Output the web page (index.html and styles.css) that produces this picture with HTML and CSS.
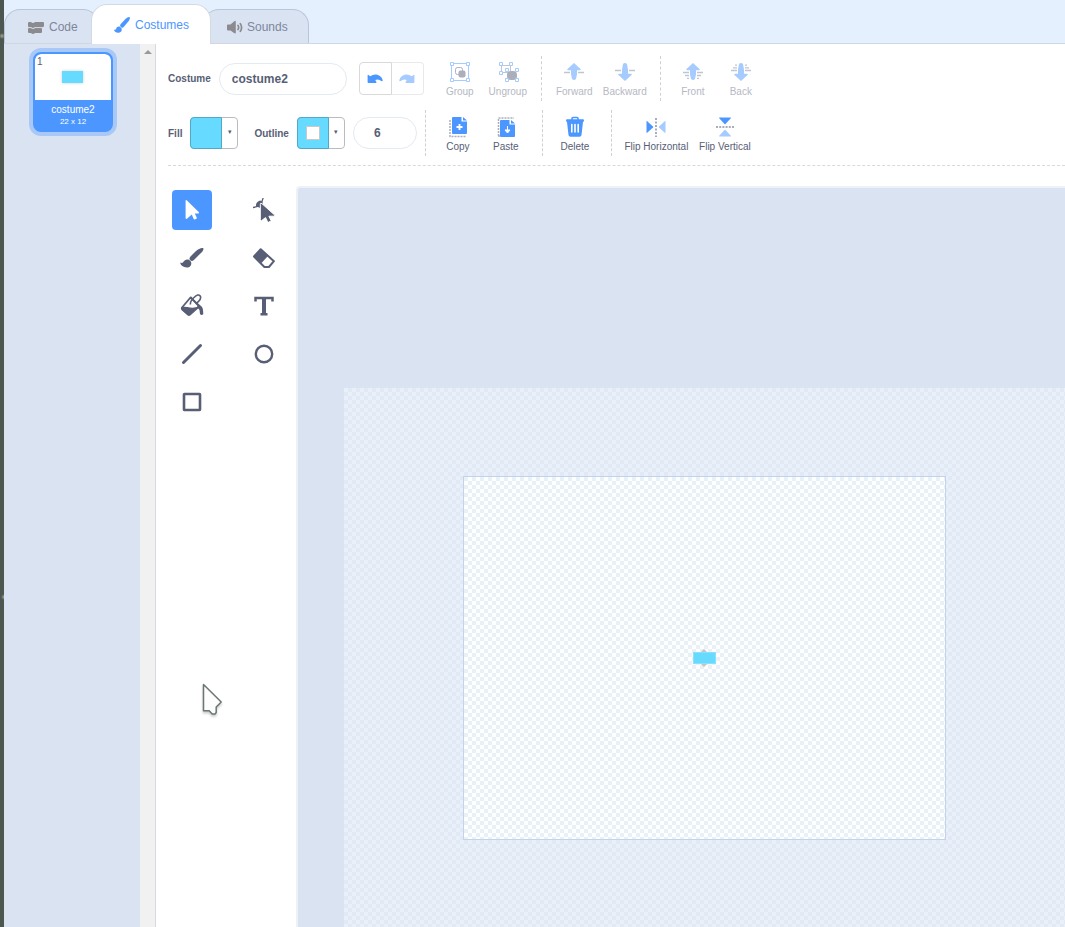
FILE: index.html
```html
<!DOCTYPE html>
<html lang="en">
<head>
<meta charset="utf-8">
<title>Costume editor</title>
<link rel="stylesheet" href="styles.css">
</head>
<body>
<div class="edge"></div>
<div class="app">
  <nav class="tabs">
    <button class="tab tab-code"><svg width="16" height="14" viewBox="0 0 16 14" fill="#8b8b8f"><path d="M1 2h2q1 1 2 1t2-1h8q1 0 1 1v3q0 1-1 1H7Q6 8 5 8T3 7H1Q0 7 0 6V3q0-1 1-1z"/><path d="M1 8h2q1 1 2 1t2-1h6q1 0 1 1v3q0 1-1 1H7q-1 1-2 1t-2-1H1q-1 0-1-1V9q0-1 1-1z"/><path d="M0 7.600h3.200q.8.9 1.800.9t1.800-.9H15" fill="none" stroke="#c5cad5" stroke-width=".6"/></svg>Code</button>
    <button class="tab tab-active"><svg width="16" height="16" viewBox="0 0 16 16" fill="#4c97ff"><path d="M15.600.2c-.8-.6-2.600.3-4.200 1.800L6.800 7c-.9 1-.9 1.900-.3 2.500l.9.900c.8.600 1.700.3 2.500-.6l4.400-5.200C15.600 2.800 16.400.8 15.600.2z"/><path d="M6.200 9.900c-1.700-.8-3.500.1-3.900 1.500-.3 1-.9 1.600-2.300 1.400 0 1.600 2 3.100 4.700 2.900 2.900-.2 4.500-3.700 1.500-5.800z"/></svg>Costumes</button>
    <button class="tab tab-sounds"><svg width="16" height="14" viewBox="0 0 16 14"><path fill="#8b8b8f" d="M1 4.500h2.500L7 1.400Q8.800 0 8.800 2v10.500q0 1.500-1.800.6L3.500 10.500H1q-1 0-1-1v-4q0-1 1-1z"/><path d="M11 5.500q1.300 2 0 4M13.300 3.600q2.600 3.900 0 7.800" fill="none" stroke="#8b8b8f" stroke-width="1.700" stroke-linecap="round"/></svg>Sounds</button>
  </nav>
  <main class="main">
    <aside class="list">
      <button class="costume">
        <span class="thumb"><span class="num">1</span><span class="sprite"></span></span>
        <span class="cname">costume2</span>
        <span class="csize">22 x 12</span>
      </button>
    </aside>
    <div class="scroll"><svg width="8" height="4" viewBox="0 0 8 4"><path d="M4 0l4 4H0z" fill="#999"/></svg></div>
    <section class="editor">
      <div class="toolbar">
        <div class="row row-top">
          <label class="lbl" for="name">Costume</label>
          <input class="field name" id="name" type="text" value="costume2">
          <div class="history">
            <button aria-label="Undo"><svg width="16" height="10" viewBox="0 0 16 10"><path fill="#4c97ff" d="M.6 1.500q0-1 .9-.5l1.700 1.200Q8-.800 12.500 1.700 15 3.100 15.700 6q0 1.800-1.400 1Q11.500 4.500 8.200 6l1 1.600q.7 1.400-.7 1.400H1.400q-.8 0-.8-.8z"/></svg></button>
            <button aria-label="Redo" disabled><svg width="16" height="10" viewBox="0 0 16 10"><path fill="#a6cbff" d="M15.400 1.500q0-1-.9-.5l-1.700 1.200Q8-.800 3.500 1.700 1 3.100.3 6q0 1.800 1.400 1Q4.500 4.500 7.800 6l-1 1.600Q6.100 9 7.500 9h7.100q.8 0 .8-.8z"/></svg></button>
          </div>
          <div class="group first">
            <button class="act off"><svg width="22" height="22" viewBox="0 0 22 22"><path d="M2.500 2.500h17v17h-17z" fill="none" stroke="#a6cbff"/><rect x="6.500" y="6.500" width="7" height="7" rx="2" fill="#fff" stroke="#abb0be"/><rect x="9.500" y="9.500" width="7" height="7" rx="2" fill="#abaebb"/><g fill="#fff" stroke="#a6cbff"><path d="M1.500 1.500h3v3h-3zM17.500 1.500h3v3h-3zM1.500 17.500h3v3h-3zM17.500 17.500h3v3h-3z"/></g></svg>Group</button>
            <button class="act off"><svg width="22" height="22" viewBox="0 0 22 22"><path d="M4.500 4.500h9v7h-9z" fill="none" stroke="#c1c5cf"/><rect x="10" y="10" width="10" height="9" rx="4" fill="#abaebb"/><g fill="#fff" stroke="#a6cbff"><path d="M2.500 1.500h3v3h-3zM12.500 1.500h3v3h-3zM2.500 10.500h3v3h-3zM8.500 7.500h3v3h-3zM18.500 7.500h3v3h-3zM8.500 17.500h3v3h-3zM18.500 17.500h3v3h-3z"/></g></svg>Ungroup</button>
          </div>
          <div class="group">
            <button class="act off mid"><svg width="22" height="22" viewBox="0 0 22 22"><path d="M1 11.500h6M15 11.500h6" stroke="#c1c5cf" stroke-width="1.500"/><path d="M11 2l6.500 6q1 1.200-.8 1.200H14v4L13 18q-2 2-4 0l-1-4.800v-4H5.300Q3.500 9.200 4.500 8z" fill="#a6cbff"/></svg>Forward</button>
            <button class="act off wide"><svg width="22" height="22" viewBox="0 0 22 22"><path d="M1 9.500h6M15 9.500h6" stroke="#c1c5cf" stroke-width="1.500"/><path d="M11 20l6.500-6q1-1.200-.8-1.200H14v-4L13 3q-2-2-4 0L8 8.800v4H5.300Q3.500 12.800 4.500 14z" fill="#a6cbff"/></svg>Backward</button>
          </div>
          <div class="group">
            <button class="act off"><svg width="22" height="22" viewBox="0 0 22 22"><path d="M1 11.500h6M15 11.500h6M3 14.500h4M15 14.500h4M5 17.300h2M15 17.300h2" stroke="#c1c5cf" stroke-width="1.300"/><path d="M11 2l6.500 6q1 1.200-.8 1.200H14v4L13 18q-2 2-4 0l-1-4.800v-4H5.300Q3.500 9.200 4.500 8z" fill="#a6cbff"/></svg>Front</button>
            <button class="act off"><svg width="22" height="22" viewBox="0 0 22 22"><path d="M1 9.500h6M15 9.500h6M3 6.800h4M15 6.800h4M5 4.200h2M15 4.200h2" stroke="#c1c5cf" stroke-width="1.300"/><path d="M11 20l6.500-6q1-1.200-.8-1.200H14v-4L13 3q-2-2-4 0L8 8.800v4H5.300Q3.500 12.800 4.500 14z" fill="#a6cbff"/></svg>Back</button>
          </div>
        </div>
        <div class="row row-low">
          <span class="lbl">Fill</span>
          <button class="swatch" aria-label="Fill colour"><span class="color"></span><span class="drop">▾</span></button>
          <span class="lbl outline">Outline</span>
          <button class="swatch" aria-label="Outline colour"><span class="color"><span class="hole"></span></span><span class="drop">▾</span></button>
          <input class="field stroke" type="text" value="6" aria-label="Outline width">
          <div class="group wide-end">
            <button class="act"><svg width="22" height="22" viewBox="0 0 22 22"><path d="M3 4v16.500h16" fill="none" stroke="#abaebb" stroke-width="1.500" stroke-dasharray="2 1"/><path d="M6 1h8.500v4.500H20V17q0 1-1 1H6q-1 0-1-1V2q0-1 1-1zM16 1l4 3.600h-4z" fill="#4c97ff"/><path d="M12.500 8v6M9.500 11h6" stroke="#fff" stroke-width="1.800"/></svg>Copy</button>
            <button class="act"><svg width="22" height="22" viewBox="0 0 22 22"><path d="M3.500 20V2H19M3 20h3" fill="none" stroke="#abaebb" stroke-width="1.500" stroke-dasharray="2 1"/><path d="M6 4h8.500v4.500H20V20q0 1-1 1H6q-1 0-1-1V5q0-1 1-1zM16 4l4 3.600h-4z" fill="#4c97ff"/><path d="M12.500 10v4h2.500l-2.500 3-2.500-3h2.500z" fill="#fff" stroke="#fff"/></svg>Paste</button>
          </div>
          <div class="group wide-end">
            <button class="act"><svg width="22" height="22" viewBox="0 0 22 22"><path d="M8 4V2.400Q8 1.500 9 1.500h4q1 0 1 .9V4" fill="none" stroke="#4c97ff" stroke-width="1.600"/><path d="M3 3.300h16q1 0 1 1.200T19 6l-1.500 13q-.2 1.800-2 1.800h-9q-1.800 0-2-1.800L3 6Q2 5.700 2 4.500t1-1.200z" fill="#4c97ff"/><path d="M7.800 8.500v7.500M11 8.500v7.500M14.200 8.500v7.500" stroke="#fff" stroke-width="1.600" stroke-linecap="round"/></svg>Delete</button>
          </div>
          <div class="group">
            <button class="act flip-h"><svg width="22" height="22" viewBox="0 0 22 22"><path d="M11 2v19" stroke="#8d93a2" stroke-width="1.500" stroke-dasharray="2 1.500"/><path d="M1.500 5.500q0-.8.700-.3L8 10.500q.5.500 0 1L2.200 16.700q-.7.500-.7-.3z" fill="#4c97ff"/><path d="M20.500 5.500q0-.8-.7-.3L14 10.500q-.5.500 0 1l5.800 5.200q.7.500.7-.3z" fill="#a6cbff"/></svg>Flip Horizontal</button>
            <button class="act flip-v"><svg width="22" height="22" viewBox="0 0 22 22"><path d="M2 11h18" stroke="#8d93a2" stroke-width="1.500" stroke-dasharray="2 1.200"/><path d="M5.500 1.500q-.8 0-.3.700L10.500 8q.5.500 1 0l5.300-5.800q.5-.7-.3-.7z" fill="#4c97ff"/><path d="M5.500 20.500q-.8 0-.3-.7l5.300-5.800q.5-.5 1 0l5.300 5.800q.5.700-.3.700z" fill="#a6cbff"/></svg>Flip Vertical</button>
          </div>
        </div>
      </div>
      <div class="work">
        <div class="tools">
          <button class="tool chosen" aria-label="Select"><svg width="24" height="24" viewBox="0 0 24 24"><path d="M5.600 2.800q0-1.500 1.100-.5l12 11.600q1.200 1.400-.5 1.500h-3.400l2 4.300q.2.700-.4 1l-1.700.7q-.7.200-1-.4l-1.900-4.400-4.600 3.900q-1.600 1.200-1.600-.8z" fill="#fff"/></svg></button>
          <button class="tool" aria-label="Reshape"><svg width="24" height="24" viewBox="0 0 24 24"><path d="M1 9.500Q9.500 9 11.200-.5" fill="none" stroke="#575e75" stroke-width="1.300"/><path d="M4 8q-.5-4 4-5.500 2 0 3 2.500l-3 5z" fill="#575e75"/><path d="M8.300 6.500v15.300q0 2 1.400.8l3.800-3 2.100 4.200q.4.700 1 .4l2-1q.6-.3.300-1l-2-4h4.700q2-.1.800-1.400L10 5.700q-1.700-1.400-1.700.8z" fill="#575e75" stroke="#fff"/></svg></button>
          <button class="tool" aria-label="Brush"><svg width="24" height="24" viewBox="0 0 24 24" fill="#575e75"><path d="M23.200 2.200c-1.400-.9-5 .8-7.700 3.200l-5.200 5.300q-1.700 2.200 0 3.600 1.500 1.400 3.600-.2l6-6.100C22.300 6 24.300 3 23.200 2.200z"/><path d="M9.300 13.900c-2.500-1.300-5 .2-5.700 1.700-.5 1.200-1.400 1.700-3.300 1 0 2.800 3.500 5.200 7.200 4.900 4.200-.5 5.200-5.600 1.800-7.600z"/></svg></button>
          <button class="tool" aria-label="Eraser"><svg width="24" height="24" viewBox="0 0 24 24"><path d="M8.700 3.200l13.200 12-5 5.800h-4.500L2 10.500z" fill="#fff" stroke="#575e75" stroke-width="2" stroke-linejoin="round"/><path d="M8.700 3l7.500 6.700-6.700 7.300-7.700-6.500z" fill="#575e75"/></svg></button>
          <button class="tool" aria-label="Fill"><svg width="24" height="24" viewBox="0 0 24 24"><path d="M10.500 3.500L2 13.500q-.7 1 .3 2l5.700 5q1 .8 2 0L19.500 12z" fill="#fff" stroke="#575e75" stroke-width="1.800" stroke-linejoin="round"/><path d="M1.500 13q3-.7 6 0 6 1.500 11-.5l-8.500 8.500q-1.200 1-2.300 0L1.500 15.500zM18.500 11q4 .5 4.500 5l.3 4q-1.700 2.200-3.300 0l-.5-4-2.500-3z" fill="#575e75"/><path d="M10.500 10.500q-.7-3 3.500-7t6-1.700-1.300 5.500q-1.500 2-3.200 2.200M10.500 3l9 10" fill="none" stroke="#575e75" stroke-width="1.600"/></svg></button>
          <button class="tool" aria-label="Text"><svg width="24" height="24" viewBox="0 0 24 24"><path d="M3.500 7.500V4h17v3.500M8.500 20.300h7" fill="none" stroke="#575e75" stroke-width="2.500"/><path d="M12 4v16" stroke="#575e75" stroke-width="4"/></svg></button>
          <button class="tool" aria-label="Line"><svg width="24" height="24" viewBox="0 0 24 24"><path d="M3.500 20.500l17-17" stroke="#575e75" stroke-width="3" stroke-linecap="round"/></svg></button>
          <button class="tool" aria-label="Circle"><svg width="24" height="24" viewBox="0 0 24 24"><circle cx="12" cy="12" r="8.200" fill="none" stroke="#575e75" stroke-width="2.400"/></svg></button>
          <button class="tool" aria-label="Rectangle"><svg width="24" height="24" viewBox="0 0 24 24"><rect x="4" y="4" width="16" height="16" rx=".5" fill="none" stroke="#575e75" stroke-width="2.600"/></svg></button>
        </div>
        <div class="canvas">
          <div class="outer"></div>
          <div class="board"></div>
          <svg class="center" width="18" height="18" viewBox="0 0 18 18"><path d="M9 0l6 6H3zM9 18l6-6H3z" fill="#c4c4c4"/></svg>
          <div class="shape"></div>
        </div>
      </div>
    </section>
  </main>
</div>
<svg class="pointer" width="24" height="36" viewBox="0 0 24 36"><path d="M3.500 2.500v26.200h5.700l3 3.300h2.800l1.200-1.500v-5.500l5-5z" fill="#fdfdfd" stroke="#6b7675" stroke-width="1.500" stroke-linejoin="round"/></svg>
</body>
</html>
```
FILE: styles.css
```css
* { box-sizing: border-box; }
body {
  margin: 0;
  display: flex;
  height: 100vh;
  overflow: hidden;
  font-family: "Liberation Sans", Arial, sans-serif;
  color: #575e75;
  background: #fff;
}
button { font: inherit; color: inherit; background: none; border: 0; padding: 0; }
svg { display: block; flex: none; }
.edge {
  width: 4px;
  flex: none;
  background:
    radial-gradient(circle at 2px 36px, #a9a58f, transparent 3px),
    radial-gradient(circle at 4px 597px, #a9a58f, transparent 3px),
    #4b5750;
}
.app { flex: 1; min-width: 0; display: flex; flex-direction: column; }

.tabs {
  display: flex;
  align-items: flex-end;
  height: 44px;
  flex: none;
  background: #e5f0ff;
  border-bottom: 1px solid #d0d7e3;
}
.tab {
  display: flex;
  align-items: center;
  gap: 5px;
  height: 34px;
  border: 1px solid #b9c5da;
  border-bottom: 0;
  border-radius: 16px 16px 0 0;
  background: #d9e3f2;
  color: #7f869b;
  font-size: 12px;
}
.tab-code { width: 95px; padding-left: 23px; }
.tab-active {
  position: relative;
  width: 120px;
  height: 40px;
  margin: 0 -8px -1px;
  padding-left: 22px;
  background: #fff;
  border-color: #d3dae5;
  color: #4c97ff;
}
.tab-sounds { width: 106px; padding-left: 23px; gap: 4px; }

.main { flex: 1; min-height: 0; display: flex; }
.list { width: 136px; flex: none; padding: 8px 29px; background: #d9e3f2; }
.costume {
  display: flex;
  flex-direction: column;
  align-items: center;
  width: 80px;
  height: 80px;
  overflow: hidden;
  border: 2px solid #4c97ff;
  border-radius: 8px;
  background: #4c97ff;
  color: #fff;
  box-shadow: 0 0 0 4px #a8c9f8;
}
.thumb {
  display: flex;
  width: 76px;
  height: 46px;
  padding: 0 2px;
  background: #fff;
  border-radius: 6px 6px 0 0;
}
.num { width: 25px; text-align: left; font-size: 10px; line-height: 16px; color: #575e75; }
.sprite { width: 21px; height: 12px; margin-top: 17px; background: #66dbff; box-shadow: 0 0 3px #ccc; }
.cname { margin-top: 3px; font-size: 10px; line-height: 13px; }
.csize { font-size: 8px; line-height: 12px; }
.scroll {
  width: 16px;
  flex: none;
  display: flex;
  justify-content: center;
  padding-top: 6px;
  background: #f1f1f1;
  border-right: 1px solid #d5d9e0;
}

.editor { flex: 1; min-width: 0; display: flex; flex-direction: column; }
.toolbar {
  display: flex;
  flex-direction: column;
  gap: 9px;
  margin-left: 12px;
  padding: 12px 0 9px;
  border-bottom: 1px dashed #d9d9d9;
}
.row { display: flex; align-items: center; }
.row-top { height: 45px; }
.row-low { height: 46px; }
.lbl { margin-right: 8px; font-size: 10px; font-weight: bold; }
.outline { margin-left: 16px; }
.field {
  height: 32px;
  border: 1px solid #e4eaf1;
  border-radius: 16px;
  outline: 0;
  background: #fff;
  font: bold 12px "Liberation Sans", Arial, sans-serif;
  color: #575e75;
}
.name { width: 128px; padding: 0 12px; }
.stroke { width: 64px; margin: 0 8px; padding: 0 20px; }
.history { display: flex; margin-left: 12px; }
.history button {
  display: grid;
  place-items: center;
  width: 33px;
  height: 33px;
  border: 1px solid #d9d9d9;
  border-radius: 4px 0 0 4px;
}
.history button + button { width: 32px; border-color: #e8e9ec; border-left: 0; border-radius: 0 4px 4px 0; }
.group { display: flex; height: 100%; padding: 0 9px 0 8px; border-left: 1px dashed #d0d0d0; }
.first { margin-left: 12px; padding-left: 0; border-left: 0; }
.wide-end { padding-right: 12px; }
.act {
  display: flex;
  flex-direction: column;
  align-items: center;
  gap: 2px;
  width: 48px;
  padding-top: 5px;
  font-size: 10px;
  line-height: 14px;
  white-space: nowrap;
}
.row-low .act { padding-top: 6px; }
.off { color: #b5b8c3; }
.mid { width: 49px; }
.wide { width: 52px; }
.flip-h { width: 73px; }
.flip-v { width: 64px; }
.swatch {
  display: flex;
  width: 48px;
  height: 32px;
  border: 1px solid #b9bbc2;
  border-radius: 4px;
}
.color {
  display: grid;
  place-items: center;
  width: 32px;
  height: 32px;
  margin: -1px 0 0 -1px;
  flex: none;
  background: #66dbff;
  border: 1px solid #52a9c5;
  border-radius: 4px 0 0 4px;
}
.hole { width: 14px; height: 14px; background: #fff; border: 1px solid #c9c9c9; }
.drop { flex: 1; font-size: 7px; line-height: 28px; text-align: center; }

.work { flex: 1; min-height: 0; display: flex; padding-top: 20px; }
.tools {
  display: grid;
  grid-template-columns: 40px 40px;
  grid-auto-rows: 40px;
  gap: 8px 32px;
  align-content: start;
  flex: none;
  padding: 4px 12px 0 16px;
}
.tool { display: grid; place-items: center; border-radius: 4px; }
.chosen { background: #4c97ff; }
.canvas {
  position: relative;
  flex: 1;
  overflow: hidden;
  border: 2px solid #eef2f8;
  border-width: 2px 0 0 2px;
  border-top-left-radius: 4px;
  background: #d9e3f2;
}
.outer, .board {
  position: absolute;
  background: conic-gradient(#e1e9f4 25%, #eaf0f9 0 50%, #e1e9f4 0 75%, #eaf0f9 0) 0 0 / 8px 8px;
}
.outer { left: 46px; top: 200px; right: 0; bottom: 0; }
.board {
  left: 165px;
  top: 288px;
  width: 483px;
  height: 364px;
  border: 1px solid #c3d3ec;
  background-image: conic-gradient(#fff 25%, #e8f0f8 0 50%, #fff 0 75%, #e8f0f8 0);
}
.center { position: absolute; left: 397px; top: 461px; }
.shape { position: absolute; left: 395px; top: 464px; width: 23px; height: 12px; background: #66dbff; border: 1px solid #8be1fb; }
.pointer { position: absolute; left: 200px; top: 682px; filter: drop-shadow(0 2px 1px #ccc); }
```
